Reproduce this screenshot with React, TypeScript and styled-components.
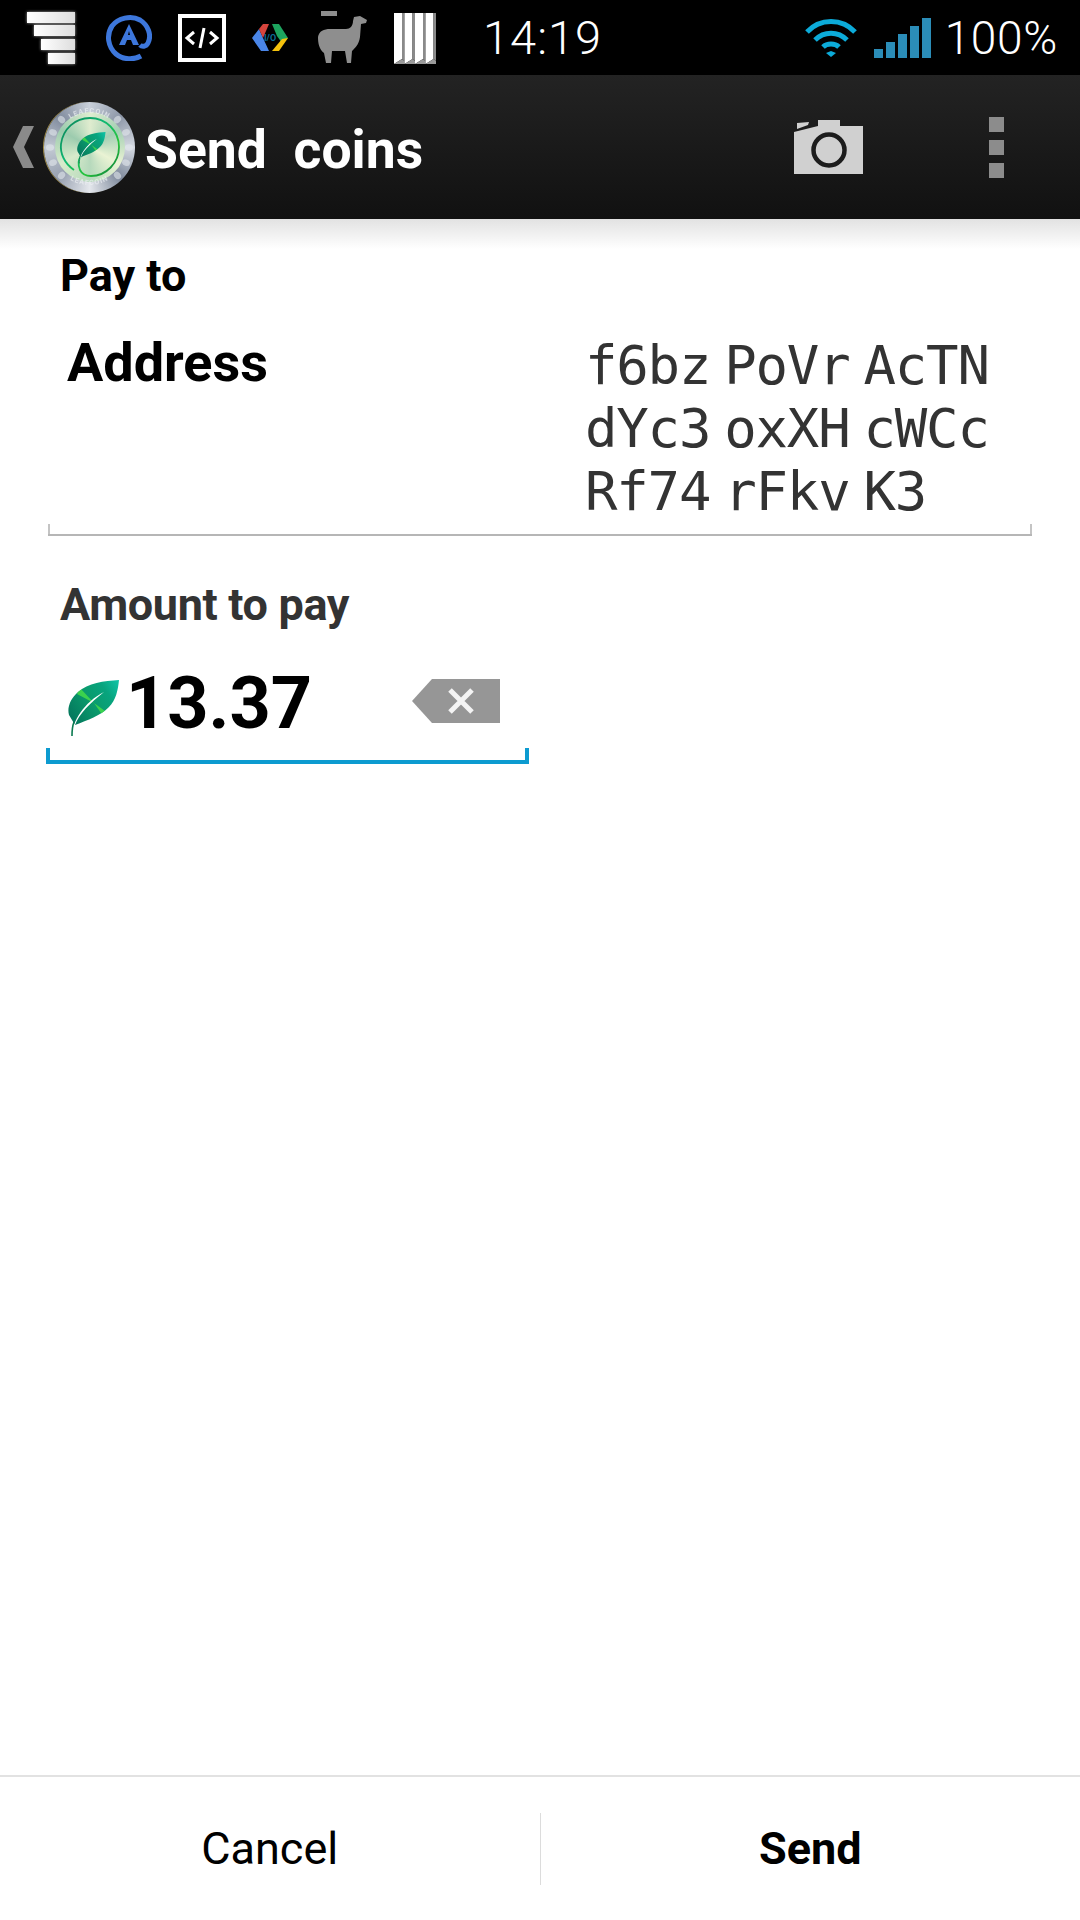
import React from "react";
import styled, { createGlobalStyle } from "styled-components";

const Global = createGlobalStyle`
  html, body { margin: 0; padding: 0; background: #fff; }
  * { box-sizing: border-box; }
`;

const Screen = styled.div`
  width: 1080px;
  height: 1920px;
  display: flex;
  flex-direction: column;
  background: #fff;
  font-family: Roboto, "Liberation Sans", sans-serif;
  overflow: hidden;
`;

const StatusBar = styled.div`
  height: 75px;
  flex: none;
  background: #000;
  display: flex;
  align-items: center;
  padding: 0 22px 0 24px;
  color: #fff;
`;

const NotifyIcons = styled.div`
  display: flex;
  align-items: center;
  gap: 26px;
`;

const LlamaIcon = styled.svg`
  width: 50px;
  height: 54px;
  margin-left: 4px;
  filter: blur(0.5px);
`;

const Clock = styled.span`
  font-size: 47px;
  font-weight: 300;
  margin-left: 47px;
  letter-spacing: 1px;
`;

const StatusRight = styled.div`
  margin-left: auto;
  display: flex;
  align-items: center;
  gap: 13px;
`;

const WifiIcon = styled.svg`
  width: 52px;
  height: 40px;
  margin-right: 4px;
`;

const Battery = styled.span`
  font-size: 46px;
  font-weight: 300;
  letter-spacing: 0.7px;
`;

const ActionBar = styled.div`
  height: 144px;
  flex: none;
  background: linear-gradient(#232323, #111);
  display: flex;
  align-items: center;
  padding: 0 76px 0 12px;
`;

const Up = styled.svg`
  width: 22px;
  height: 42px;
  flex: none;
`;

const Coin = styled.div`
  position: relative;
  width: 91px;
  height: 91px;
  border-radius: 50%;
  margin-left: 10px;
  flex: none;
  display: flex;
  align-items: center;
  justify-content: center;
  background: conic-gradient(#c9d0da, #8d97a8, #d5dae2, #7f8a9c, #e4e7ec, #97a0b0, #c3cad4, #808b9d, #c9d0da);
  box-shadow: -1px 0 0 #a08c46;
`;

const CoinRim = styled.svg`
  position: absolute;
  inset: 0;
  width: 91px;
  height: 91px;
`;

const CoinFace = styled.div`
  width: 70px;
  height: 70px;
  border-radius: 50%;
  display: flex;
  align-items: center;
  justify-content: center;
  background: conic-gradient(#dfeccf, #a4cfb4, #eaf3d4, #b6d9bc, #d8ebcb, #9ccbae, #dfeccf);
`;

const Title = styled.h1`
  margin: 4px 0 0 10px;
  font-size: 53.5px;
  font-weight: 700;
  color: #fff;
  white-space: pre;
`;

const Actions = styled.div`
  margin-left: auto;
  display: flex;
  align-items: center;
  gap: 125px;
`;

const Overflow = styled.div`
  display: flex;
  flex-direction: column;
  gap: 8px;
`;

const Dot = styled.span`
  width: 15px;
  height: 15px;
  background: #8c8c8c;
`;

const Content = styled.main`
  flex: 1;
  padding: 33px 48px 0;
  background: linear-gradient(#e2e2e2, #fff 30px) no-repeat;
  background-size: 100% 30px;
`;

const SectionLabel = styled.div`
  font-size: 45px;
  line-height: 48px;
  font-weight: 700;
  padding-left: 12px;
  color: #000;
`;

const AddressField = styled.div`
  position: relative;
  width: 984px;
  height: 214px;
  margin-top: 22px;
  padding: 10px 0 0 19px;
  display: flex;
  justify-content: space-between;
  border-bottom: 2px solid #b6b6b6;
  &::before, &::after {
    content: "";
    position: absolute;
    bottom: 0;
    width: 2px;
    height: 10px;
    background: #c4c4c4;
  }
  &::before { left: 0; }
  &::after { right: 0; }
`;

const AddressLabel = styled.span`
  font-size: 54px;
  line-height: 62px;
  font-weight: 700;
  color: #000;
`;

const AddressValue = styled.div`
  width: 447px;
  font-family: "DejaVu Sans Mono", monospace;
  font-size: 54px;
  line-height: 63px;
  letter-spacing: -1.2px;
  color: #333;
  margin-top: 2px;
`;

const AddressLine = styled.div`
  display: flex;
  gap: 14px;
`;

const AmountLabel = styled(SectionLabel)`
  margin-top: 45px;
  letter-spacing: -0.35px;
  color: #333;
`;

const AmountField = styled.div`
  position: relative;
  width: 483px;
  height: 135px;
  margin: 0 0 0 -2px;
  padding: 0 29px 16px 22px;
  display: flex;
  align-items: flex-end;
  border-bottom: 4px solid #0d9bd0;
  &::before, &::after {
    content: "";
    position: absolute;
    bottom: 0;
    width: 4px;
    height: 12px;
    background: #0d9bd0;
  }
  &::before { left: 0; }
  &::after { right: 0; }
`;

const LeafSlot = styled.span`
  display: flex;
  margin-bottom: 7px;
`;

const AmountValue = styled.span`
  font-size: 72px;
  font-weight: 700;
  line-height: 80px;
  color: #000;
  margin-left: 6px;
`;

const Clear = styled.svg`
  margin-left: auto;
  margin-bottom: 21px;
  width: 88px;
  height: 44px;
`;

const Footer = styled.footer`
  height: 145px;
  flex: none;
  border-top: 2px solid #e2e2e2;
  display: flex;
  align-items: center;
`;

const FooterButton = styled.button<{ $primary?: boolean }>`
  flex: 1;
  height: 72px;
  border: 0;
  background: none;
  padding: 0;
  font-family: inherit;
  font-size: 45px;
  color: #000;
  font-weight: ${(p) => (p.$primary ? 700 : 400)};
  & + & { border-left: 1px solid #dcdcdc; }
`;

const LEAF =
  "M51 0C36 1 20 3 10 12 2 19-1 28 1 35L7 45C20 40 32 36 41 27 48 20 50 10 51 0Z";

const LeafShape = ({ id }: { id: string }) => (
  <>
    <defs>
      <linearGradient id={id} x1="0" y1="0.7" x2="1" y2="0.1">
        <stop offset="0" stopColor="#057a5e" />
        <stop offset=".42" stopColor="#0a9a6c" />
        <stop offset=".75" stopColor="#08a47e" />
        <stop offset="1" stopColor="#10c0a2" />
      </linearGradient>
      <clipPath id={`${id}c`}>
        <path d={LEAF} />
      </clipPath>
    </defs>
    <path d={LEAF} fill={`url(#${id})`} />
    <g clipPath={`url(#${id}c)`} fill="#45dc48" opacity=".85">
      <path d="M26 23 12 8 9 14Z" />
      <path d="M26 23 44 36 38 40Z" />
    </g>
    <path d="M4 56C4 42 16 22 36 12 22 23 11 34 7 45 5 49 5 52 4 56Z" fill="#fff" />
    <path d="M4 56C4 51 4 47 6 42" stroke="#0b7a50" strokeWidth="1.6" fill="none" />
  </>
);

const scallops = Array.from({ length: 16 }, (_, i) => (i * 360) / 16).filter(
  (a) => !(a > 320 || a < 40 || (a > 140 && a < 220))
);

export default function App() {
  return (
    <Screen>
      <Global />
      <StatusBar>
        <NotifyIcons>
          <svg width="56" height="58" viewBox="0 0 56 58">
            <defs>
              <linearGradient id="stack" x1="0" x2="1">
                <stop offset="0" stopColor="#fff" />
                <stop offset="1" stopColor="#ddd" />
              </linearGradient>
            </defs>
            <g fill="url(#stack)" style={{ filter: "drop-shadow(0 0 1.5px #aaa)" }}>
              <rect x="3" y="3" width="48" height="11" />
              <rect x="10" y="16" width="41" height="11" />
              <rect x="17" y="30" width="34" height="11" />
              <rect x="24" y="44" width="27" height="11" />
            </g>
          </svg>
          <svg width="46" height="46" viewBox="0 0 46 46" fill="none">
            <path d="M35 41C28 45 17 45 10 39 2 32 0 20 6 11 12 3 25 0 34 5 42 10 46 20 42 28 40 32 36 32 34 30" stroke="#3d77dc" strokeWidth="5" />
            <path d="M13 30 23 9 33 30H27L25 25H21L19 30Z M22 20H24L23 16Z" fill="#3d77dc" fillRule="evenodd" />
          </svg>
          <svg width="48" height="48" viewBox="0 0 48 48" fill="none">
            <rect x="2" y="2" width="44" height="44" stroke="#fff" strokeWidth="4" />
            <path d="M16 18 9 24 16 30M32 18 39 24 32 30" stroke="#fff" strokeWidth="3" />
            <path d="M26 14 22 34" stroke="#fff" strokeWidth="3" />
          </svg>
          <svg width="36" height="28" viewBox="0 0 36 28">
            <path d="M0 14 7 5 11 14 17 27H9Z" fill="#4a86e8" />
            <path d="M7 5 11 0H17L11 14Z" fill="#d6453d" />
            <path d="M20 0H27L36 14 30 19 25 12Z" fill="#1da45f" />
            <path d="M36 14 27 27H20L30 15Z" fill="#f4c20d" />
            <text x="18" y="17" textAnchor="middle" fontSize="9" fontFamily="Roboto, sans-serif" fontWeight="700" fill="#0a6f96">I/O</text>
          </svg>
          <LlamaIcon viewBox="0 0 50 54">
            <path d="M3 0H19V5H3Z" fill="#8d8d8d" />
            <path d="M36 6 42 5 49 9 48 12 43 13 42 26C41 34 36 38 34 40L33 52H29L27 40H14L13 52H8L6 42C1 38 0 32 0 26 1 20 6 18 12 18H28C32 18 35 15 35 10Z" fill="#8e8e8e" />
          </LlamaIcon>
          <svg width="42" height="52" viewBox="0 0 42 52">
            {[0, 10.5, 21, 31.5].map((x) => (
              <g key={x}>
                <path d={`M${x} 1H${x + 8}V47L${x} 52Z`} fill="#fff" />
                <path d={`M${x + 8} 1H${x + 10.5}V49L${x + 8} 47Z`} fill="#8a8a8a" />
                <path d={`M${x} 52 ${x + 8} 47 ${x + 10.5} 49V52Z`} fill="#9a9a9a" />
              </g>
            ))}
          </svg>
        </NotifyIcons>
        <Clock>14:19</Clock>
        <StatusRight>
          <WifiIcon viewBox="0 0 52 40" fill="none" stroke="#0cabd9" strokeWidth="5">
            <path d="M2 14C15 0 37 0 50 14" />
            <path d="M10 22C19 13 33 13 42 22" />
            <path d="M18 29C22 25 30 25 34 29" />
            <path d="M21 35 26 39 31 35 26 33Z" fill="#0cabd9" stroke="none" />
          </WifiIcon>
          <svg width="58" height="40" viewBox="0 0 58 40" fill="#2b8db8">
            <rect x="0" y="31" width="9" height="9" />
            <rect x="12" y="24" width="9" height="16" />
            <rect x="24" y="16" width="9" height="24" />
            <rect x="36" y="8" width="9" height="32" />
            <rect x="48" y="0" width="9" height="40" />
          </svg>
          <Battery>100%</Battery>
        </StatusRight>
      </StatusBar>

      <ActionBar>
        <Up viewBox="0 0 22 42">
          <path d="M11 0H22L12 21 22 42H11L1 21Z" fill="#8a8a8a" />
        </Up>
        <Coin>
          <CoinRim viewBox="0 0 91 91">
            <defs>
              <path id="rimTop" d="M11 45.5A34.5 34.5 0 0 1 80 45.5" />
              <path id="rimBottom" d="M8 45.5A37.5 37.5 0 0 0 83 45.5" />
            </defs>
            {scallops.map((a) => (
              <ellipse key={a} cx="45.5" cy="6" rx="3.2" ry="4" fill="#e3e7ec" opacity=".6" transform={`rotate(${a} 45.5 45.5)`} />
            ))}
            <text fontSize="7" fontFamily="Roboto, sans-serif" fontWeight="700" fill="#eef1f4" opacity=".7" letterSpacing="1">
              <textPath href="#rimTop" startOffset="50%" textAnchor="middle">LEAFCOIN</textPath>
            </text>
            <text fontSize="7" fontFamily="Roboto, sans-serif" fontWeight="700" fill="#eef1f4" opacity=".7" letterSpacing="1">
              <textPath href="#rimBottom" startOffset="50%" textAnchor="middle">LEAFCOIN</textPath>
            </text>
          </CoinRim>
          <CoinFace>
            <svg width="70" height="70" viewBox="0 0 70 70" fill="none">
              <defs>
                <linearGradient id="ring" x1="0" y1="0" x2="1" y2="1">
                  <stop offset="0" stopColor="#0a7d55" />
                  <stop offset=".4" stopColor="#0fb873" />
                  <stop offset=".7" stopColor="#27c43a" />
                  <stop offset="1" stopColor="#087040" />
                </linearGradient>
              </defs>
              <path d="M19 58C9 51 5 41 6 32 8 17 20 6 35 6 51 6 64 19 64 35 64 51 51 64 36 64 31 64 27 62 25 58 23 53 23 48 26 44" stroke="url(#ring)" strokeWidth="1.8" />
              <g transform="translate(22 20) scale(.56)">
                <LeafShape id="coinleaf" />
              </g>
            </svg>
          </CoinFace>
        </Coin>
        <Title>Send  coins</Title>
        <Actions>
          <svg width="70" height="55" viewBox="0 0 70 55">
            <path fill="#d0d0d0" d="M3 3 15 2 14 5 3 9Z" />
            <path fill="#d0d0d0" d="M0 12 24 6V0H46V6H69V54H0Z" />
            <circle cx="35" cy="30" r="15.5" fill="none" stroke="#1c1c1c" strokeWidth="4.5" />
          </svg>
          <Overflow>
            <Dot />
            <Dot />
            <Dot />
          </Overflow>
        </Actions>
      </ActionBar>

      <Content>
        <SectionLabel>Pay to</SectionLabel>
        <AddressField>
          <AddressLabel>Address</AddressLabel>
          <AddressValue>
            <AddressLine><span>f6bz</span><span>PoVr</span><span>AcTN</span></AddressLine>
            <AddressLine><span>dYc3</span><span>oxXH</span><span>cWCc</span></AddressLine>
            <AddressLine><span>Rf74</span><span>rFkv</span><span>K3</span></AddressLine>
          </AddressValue>
        </AddressField>
        <AmountLabel>Amount to pay</AmountLabel>
        <AmountField>
          <LeafSlot>
            <svg width="52" height="57" viewBox="0 0 52 57">
              <LeafShape id="amountleaf" />
            </svg>
          </LeafSlot>
          <AmountValue>13.37</AmountValue>
          <Clear viewBox="0 0 88 44">
            <path d="M20 0H88V44H20L0 22Z" fill="#969696" />
            <path d="M38 11 60 33M60 11 38 33" stroke="#f4f4f4" strokeWidth="5" />
          </Clear>
        </AmountField>
      </Content>

      <Footer>
        <FooterButton>Cancel</FooterButton>
        <FooterButton $primary>Send</FooterButton>
      </Footer>
    </Screen>
  );
}
